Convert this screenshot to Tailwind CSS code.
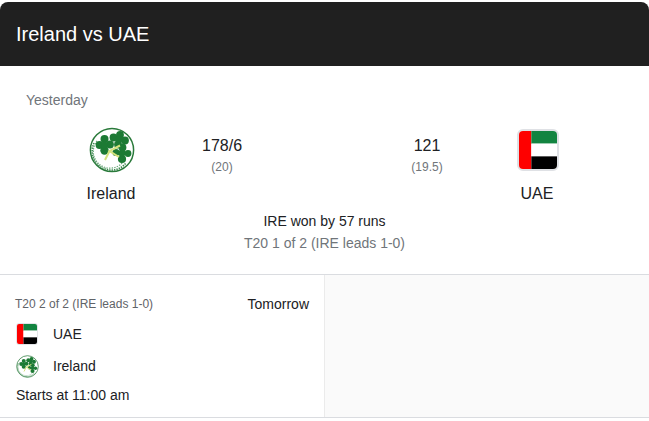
<!DOCTYPE html>
<html lang="en">
<head>
  <meta charset="UTF-8" />
  <title>Ireland vs UAE</title>
  <script src="https://cdn.jsdelivr.net/npm/@tailwindcss/browser@4"></script>
</head>
<body class="bg-white font-['Liberation_Sans',Arial,sans-serif] text-[#202124] overflow-hidden">
  <svg class="hidden">
    <symbol id="ireland" viewBox="0 0 46 46">
      <circle cx="23" cy="23" r="21.6" fill="#fff" stroke="#2a7a3b" stroke-width="1.5" />
      <path d="M5 16 A19 19 0 0 0 37 36" fill="none" stroke="#3f8a52" stroke-width="1.6" stroke-dasharray="1.4 1" />
      <path d="M8 14 A16.5 16.5 0 0 0 34 35" fill="none" stroke="#6aa87a" stroke-width="1.2" stroke-dasharray="1.4 1.2" />
      <g fill="#1c7a34">
        <circle cx="10.5" cy="18" r="3.9" /><circle cx="15.5" cy="12" r="4" /><circle cx="21" cy="17.5" r="3.9" /><circle cx="15.5" cy="23.5" r="4.2" /><circle cx="15.5" cy="18" r="3.5" />
        <circle cx="24.5" cy="10.5" r="3.9" /><circle cx="31" cy="7.8" r="3.9" /><circle cx="36" cy="13.5" r="3.9" /><circle cx="29" cy="17.5" r="3.9" /><circle cx="30" cy="12.5" r="3.5" />
        <circle cx="27" cy="25.5" r="3.6" /><circle cx="33.5" cy="20.5" r="3.9" /><circle cx="39" cy="26.5" r="3.4" /><circle cx="33" cy="32" r="4.1" /><circle cx="33" cy="26" r="3.5" />
      </g>
      <path d="M31 18.5 L20.5 24 L30 30 M20.5 24 L16 33" fill="none" stroke="#d4e27c" stroke-width="2" />
    </symbol>
    <symbol id="uae" viewBox="0 0 40 40">
      <rect width="13" height="40" fill="#fe0000" />
      <rect x="13" width="27" height="13.3" fill="#128440" />
      <rect x="13" y="13.3" width="27" height="13.4" fill="#fff" />
      <rect x="13" y="26.7" width="27" height="13.3" fill="#000" />
    </symbol>
  </svg>

  <header class="mt-[2px] h-[64px] bg-[#202020] rounded-t-lg flex items-center px-4">
    <h1 class="text-[20px] text-white">Ireland vs UAE</h1>
  </header>

  <main>
    <section class="h-[209px] border-b border-[#dadce0]">
      <p class="pl-[26px] pt-[25px] text-[14px] leading-[18px] text-[#70757a]">Yesterday</p>
      <div class="flex mt-[10px] h-[86px]">
        <div class="w-[222px] flex flex-col items-center">
          <svg class="w-[46px] h-[46px] shrink-0 mt-[8px] ml-px"><use href="#ireland" /></svg>
          <span class="mt-[11px] text-[16px] leading-[20px]">Ireland</span>
        </div>
        <div class="w-0 flex flex-col items-center">
          <span class="mt-[17px] text-[16px] leading-[20px] whitespace-nowrap">178/6</span>
          <span class="mt-[3px] text-[12px] leading-[16px] text-[#70757a]">(20)</span>
        </div>
        <div class="w-[205px]"></div>
        <div class="w-0 flex flex-col items-center">
          <span class="mt-[17px] text-[16px] leading-[20px]">121</span>
          <span class="mt-[3px] text-[12px] leading-[16px] text-[#70757a]">(19.5)</span>
        </div>
        <div class="w-[220px] flex flex-col items-center">
          <div class="mt-[10px] ml-px w-[42px] h-[42px] shrink-0 border-2 border-[#dfe1e5] rounded-md overflow-hidden">
            <svg class="w-full h-full block"><use href="#uae" /></svg>
          </div>
          <span class="mt-[13px] text-[16px] leading-[20px]">UAE</span>
        </div>
      </div>
      <p class="pt-[6px] text-center text-[14px] leading-[20px]">IRE won by 57 runs</p>
      <p class="mt-[2px] text-center text-[14px] leading-[20px] text-[#70757a]">T20 1 of 2 (IRE leads 1-0)</p>
    </section>

    <section class="flex h-[143px] border-b border-[#dadce0]">
      <div class="w-[325px] border-r border-[#ebebeb] pl-[15px] pr-[15px]">
        <div class="flex justify-between items-center pt-[20px]">
          <span class="text-[12px] leading-[18px] text-[#5f6368]">T20 2 of 2 (IRE leads 1-0)</span>
          <span class="text-[14px] leading-[18px]">Tomorrow</span>
        </div>
        <div class="flex items-center mt-[5px] h-[32px]">
          <div class="ml-[1px] w-[22px] h-[22px] border border-[#e3e5e8] rounded-[3px] overflow-hidden">
            <svg class="w-full h-full block"><use href="#uae" /></svg>
          </div>
          <span class="ml-[15px] text-[14px]">UAE</span>
        </div>
        <div class="flex items-center h-[32px]">
          <svg class="ml-px w-[23px] h-[23px]"><use href="#ireland" /></svg>
          <span class="ml-[14px] text-[14px]">Ireland</span>
        </div>
        <p class="ml-px mt-[3px] text-[14px] leading-[20px]">Starts at 11:00 am</p>
      </div>
      <div class="flex-1 bg-[#fafafa]"></div>
    </section>
  </main>
</body>
</html>
